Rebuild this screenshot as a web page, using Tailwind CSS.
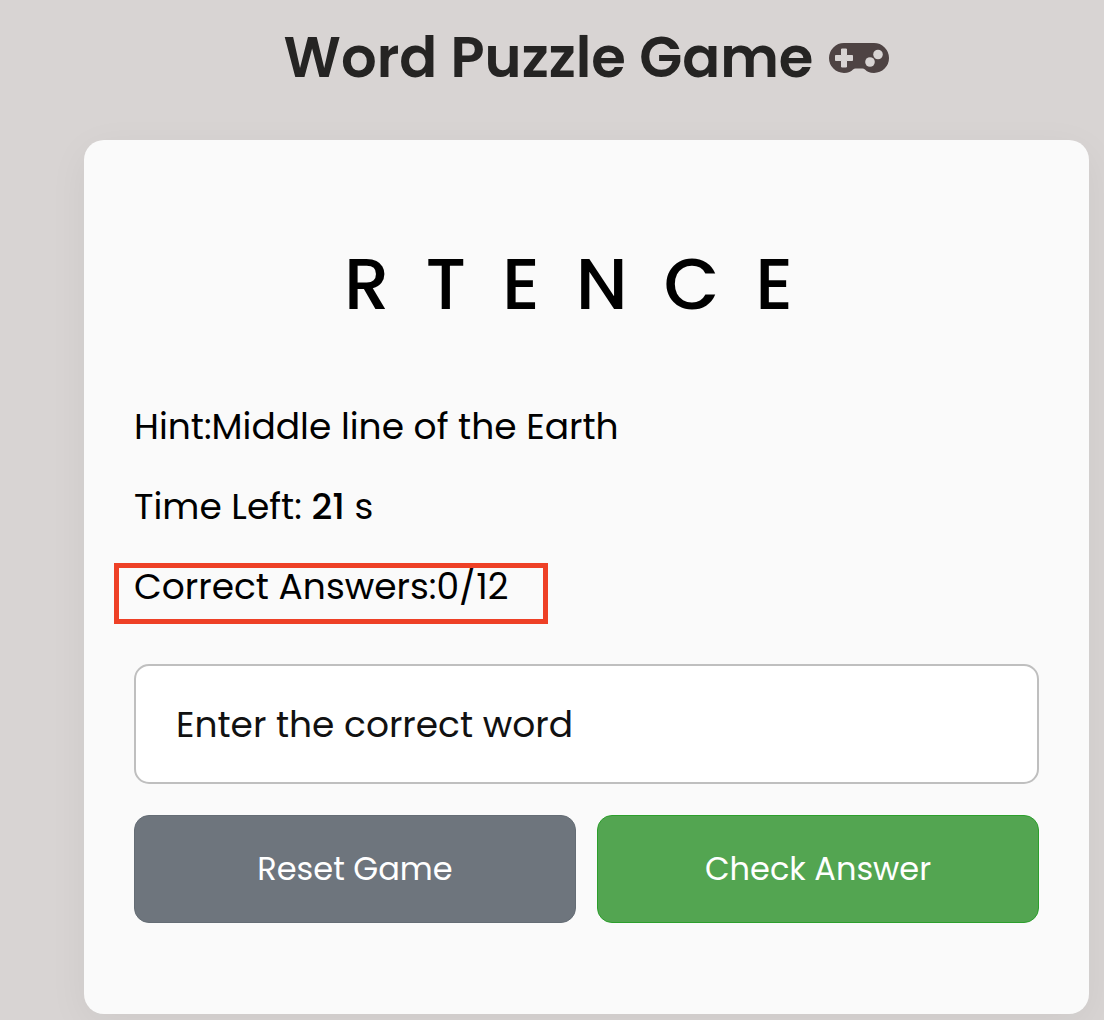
<!DOCTYPE html>
<html lang="en">
<head>
<meta charset="utf-8">
<meta name="viewport" content="width=device-width, initial-scale=1">
<title>Word Puzzle Game</title>
<script src="https://cdn.jsdelivr.net/npm/@tailwindcss/browser@4"></script>
</head>
<body class="min-h-screen bg-[#d8d4d3] font-[Poppins,Inter,sans-serif] text-black">
<main class="flex flex-col pt-6 pr-[15px] pb-[6px] pl-[84px]">
  <h1 class="flex items-center justify-center gap-4 text-[56px] leading-[68px] font-semibold whitespace-nowrap text-[#252423]">
    <span>Word Puzzle Game</span>
    <svg class="h-[30px] w-[60px] shrink-0" viewBox="0 0 60 30" aria-hidden="true">
      <path fill="#4e4343" d="M15 0H45A15 15 0 0 1 45 30C40.500 30 38 28.500 36 26.500Q34.800 25.500 33.500 25.500H26.500Q25.200 25.500 24 26.500C22 28.500 19.500 30 15 30A15 15 0 0 1 15 0Z"/>
      <path fill="#d8d4d3" stroke="#d8d4d3" stroke-width="1" stroke-linejoin="round" d="M12.500 6h5v6.500h6v5h-6v6.500h-5v-6.500h-6v-5h6z"/>
      <circle cx="41" cy="19" r="4.800" fill="#d8d4d3"/>
      <circle cx="49" cy="11.500" r="4.800" fill="#d8d4d3"/>
    </svg>
  </h1>
  <section class="mt-12 flex flex-col rounded-[20px] bg-[#fafafa] px-[50px] pt-[90px] pb-[91px] shadow-[0_10px_40px_rgba(0,0,0,0.05)]">
    <p class="text-center text-[72px] leading-[108px] font-medium tracking-[36px] whitespace-nowrap">RTENCE</p>
    <div class="mt-[62px] flex flex-col gap-[26px] text-[36px] leading-[54px]">
      <p>Hint:<span>Middle line of the Earth</span></p>
      <p>Time Left: <b class="font-medium">21</b> s</p>
      <div class="relative">
        <p>Correct Answers:<span>0/12</span></p>
        <div class="pointer-events-none absolute top-[3px] -left-5 h-[61px] w-[434px] border-5 border-[#ee4026]"></div>
      </div>
    </div>
    <form class="mt-[50px] flex flex-col gap-[31px]">
      <input type="text" aria-label="Enter the correct word" placeholder="Enter the correct word" class="h-[120px] w-full rounded-[15px] border-2 border-[#bfbfbf] bg-white px-10 text-[36px] placeholder:text-[#111111]">
      <div class="grid grid-cols-2 gap-[21px] text-[32px] text-white">
        <button type="button" class="h-[108px] rounded-[15px] border border-[#656d75] bg-[#6e757d]">Reset Game</button>
        <button type="button" class="h-[108px] rounded-[15px] border border-[#2c9f2c] bg-[#53a551]">Check Answer</button>
      </div>
    </form>
  </section>
</main>
</body>
</html>
